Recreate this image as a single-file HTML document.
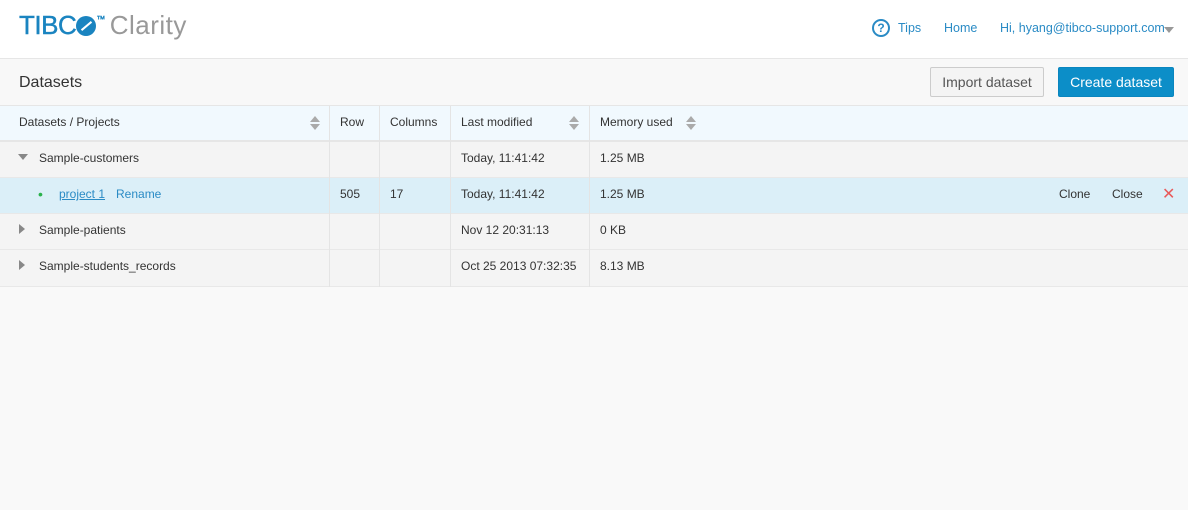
<!DOCTYPE html>
<html><head><meta charset="utf-8"><style>
*{margin:0;padding:0;box-sizing:border-box}
body{width:1188px;height:510px;background:#f9f9f9;font-family:"Liberation Sans",Arial,sans-serif;font-size:12px;color:#333;position:relative;overflow:hidden}
.hdr{position:absolute;left:0;top:0;width:1188px;height:59px;background:#fff;border-bottom:1px solid #e6e6e6}
.logo{position:absolute;left:19px;top:10px;font-size:26px;white-space:nowrap}
.tib{color:#1a84c0;letter-spacing:-0.5px;-webkit-text-stroke:0.4px #1a84c0}
.cl{color:#999;margin-left:5px;letter-spacing:0.5px}
.nav{position:absolute;top:21px;font-size:12.5px;color:#2a8bc5}
.bar{position:absolute;left:0;top:59px;width:1188px;height:47px;background:#f8f8f8;border-bottom:1px solid #e6e6e6}
.title{position:absolute;left:19px;top:15px;font-size:16px;color:#333}
.btn{position:absolute;top:8px;height:30px;line-height:28px;font-size:14px;text-align:center;border-radius:2px}
.imp{left:930px;width:114px;background:#f4f4f4;border:1px solid #ccc;color:#555}
.cre{left:1058px;width:116px;background:#0c8ec8;color:#fff;border:1px solid #0a86bf}
.row{position:absolute;left:0;width:1188px;height:36px;border-bottom:1px solid #e8e8e8;background:#f4f4f4}
.row div{position:absolute;top:0;height:33px;line-height:33px;white-space:nowrap}
.th{background:#f1f9fe;top:106px;border-bottom:2px solid #e6e6e6}
.sel{background:#dbeff8}
.vl{position:absolute;top:106px;height:181px;width:1px;background:#e4e4e4}
.sort{position:absolute;width:0;height:0;border-left:5px solid transparent;border-right:5px solid transparent}
.tri-d{display:inline-block;width:0;height:0;border-left:5px solid transparent;border-right:5px solid transparent;border-top:6px solid #888;}
.tri-r{display:inline-block;width:0;height:0;border-top:5px solid transparent;border-bottom:5px solid transparent;border-left:6px solid #888;}
</style></head><body>
<div class="hdr">
 <div class="logo"><span class="tib">TIBC<span style="display:inline-block;width:20px;height:20px;border-radius:50%;background:#1a84c0;vertical-align:-2px;position:relative"><span style="position:absolute;left:4px;top:9px;width:13px;height:2px;background:#fff;transform:rotate(-40deg)"></span></span><sup style="font-size:9px;vertical-align:12px">™</sup></span><span class="cl">Clarity</span></div>
 <div class="nav" style="left:872px;top:19px"><span style="display:inline-block;width:18px;height:18px;border:2px solid #2a8bc5;border-radius:50%;text-align:center;line-height:14px;font-weight:bold;font-size:12px">?</span></div>
 <div class="nav" style="left:898px">Tips</div>
 <div class="nav" style="left:944px">Home</div>
 <div class="nav" style="left:1000px">Hi, hyang@tibco-support.com</div>
 <div style="position:absolute;left:1164px;top:27px;border-left:5px solid transparent;border-right:5px solid transparent;border-top:6px solid #999"></div>
</div>
<div class="bar">
 <div class="title">Datasets</div>
 <div class="btn imp">Import dataset</div>
 <div class="btn cre">Create dataset</div>
</div>
<div class="row th" style="height:36px">
 <div style="left:19px">Datasets / Projects</div>
 <div style="left:340px">Row</div>
 <div style="left:390px">Columns</div>
 <div style="left:461px">Last modified</div>
 <div style="left:600px">Memory used</div>
</div>
<div class="sort" style="left:310px;top:116px;border-bottom:6px solid #aaa"></div><div class="sort" style="left:310px;top:124px;border-top:6px solid #aaa"></div>
<div class="sort" style="left:569px;top:116px;border-bottom:6px solid #aaa"></div><div class="sort" style="left:569px;top:124px;border-top:6px solid #aaa"></div>
<div class="sort" style="left:686px;top:116px;border-bottom:6px solid #aaa"></div><div class="sort" style="left:686px;top:124px;border-top:6px solid #aaa"></div>
<div class="row" style="top:142px"><div style="left:18px"><span class="tri-d" style="vertical-align:2px"></span></div><div style="left:39px">Sample-customers</div><div style="left:461px">Today, 11:41:42</div><div style="left:600px">1.25 MB</div></div>
<div class="row sel" style="top:178px"><div style="left:38px;color:#2ab24c;font-size:14px">•</div><div style="left:59px;color:#2a8bc5;text-decoration:underline">project 1</div><div style="left:116px;color:#2a8bc5">Rename</div><div style="left:340px">505</div><div style="left:390px">17</div><div style="left:461px">Today, 11:41:42</div><div style="left:600px">1.25 MB</div><div style="left:1059px">Clone</div><div style="left:1112px">Close</div><div style="left:1162px;color:#e85a5a;font-size:16px">✕</div></div>
<div class="row" style="top:214px"><div style="left:19px"><span class="tri-r" style="vertical-align:0"></span></div><div style="left:39px">Sample-patients</div><div style="left:461px">Nov 12 20:31:13</div><div style="left:600px">0 KB</div></div>
<div class="row" style="top:250px;height:37px"><div style="left:19px"><span class="tri-r"></span></div><div style="left:39px">Sample-students_records</div><div style="left:461px">Oct 25 2013 07:32:35</div><div style="left:600px">8.13 MB</div></div>
<div class="vl" style="left:329px"></div><div class="vl" style="left:379px"></div><div class="vl" style="left:450px"></div><div class="vl" style="left:589px"></div>
</body></html>
